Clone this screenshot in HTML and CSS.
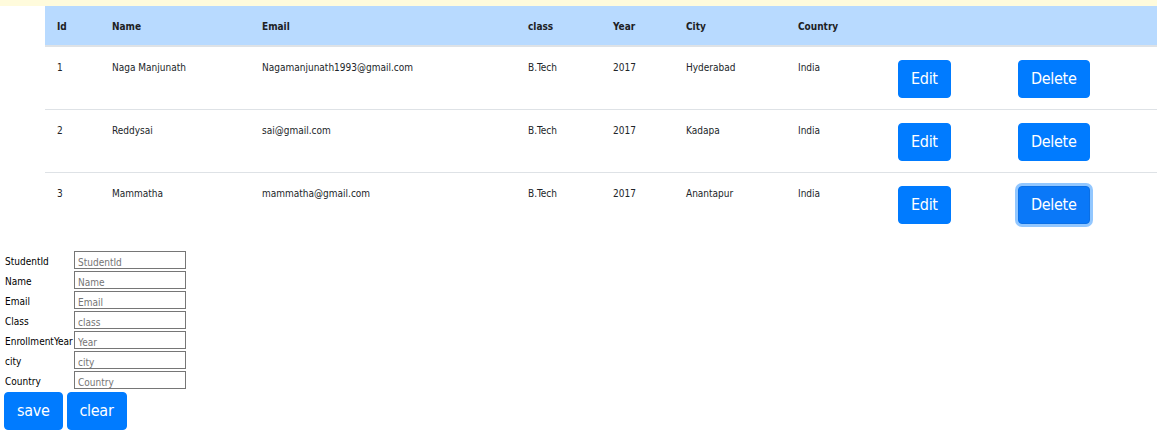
FILE: index.html
```html
<!DOCTYPE html>
<html>
<head>
<meta charset="utf-8">
<title>Students</title>
<link rel="stylesheet" href="styles.css">
</head>
<body>
<div class="notice"></div>
<table class="students">
  <thead>
    <tr>
      <th class="c-id">Id</th>
      <th class="c-name">Name</th>
      <th class="c-email">Email</th>
      <th class="c-class">class</th>
      <th class="c-year">Year</th>
      <th class="c-city">City</th>
      <th class="c-country">Country</th>
      <th class="c-edit"></th>
      <th class="c-del"></th>
    </tr>
  </thead>
  <tbody>
    <tr>
      <td>1</td><td>Naga Manjunath</td><td>Nagamanjunath1993@gmail.com</td><td>B.Tech</td><td>2017</td><td>Hyderabad</td><td>India</td>
      <td><button class="btn">Edit</button></td><td><button class="btn">Delete</button></td>
    </tr>
    <tr>
      <td>2</td><td>Reddysai</td><td>sai@gmail.com</td><td>B.Tech</td><td>2017</td><td>Kadapa</td><td>India</td>
      <td><button class="btn">Edit</button></td><td><button class="btn">Delete</button></td>
    </tr>
    <tr>
      <td>3</td><td>Mammatha</td><td>mammatha@gmail.com</td><td>B.Tech</td><td>2017</td><td>Anantapur</td><td>India</td>
      <td><button class="btn">Edit</button></td><td><button class="btn btn-focus">Delete</button></td>
    </tr>
  </tbody>
</table>

<form class="student-form">
  <div class="fields">
    <label class="lbl">StudentId</label><input class="inp" type="text" placeholder="StudentId">
    <label class="lbl">Name</label><input class="inp" type="text" placeholder="Name">
    <label class="lbl">Email</label><input class="inp" type="text" placeholder="Email">
    <label class="lbl">Class</label><input class="inp" type="text" placeholder="class">
    <label class="lbl">EnrollmentYear</label><input class="inp" type="text" placeholder="Year">
    <label class="lbl">city</label><input class="inp" type="text" placeholder="city">
    <label class="lbl">Country</label><input class="inp" type="text" placeholder="Country">
  </div>
  <div class="actions">
    <button class="btn" type="button">save</button>
    <button class="btn" type="button">clear</button>
  </div>
</form>
</body>
</html>
```

FILE: styles.css
```css
html, body {
  margin: 0;
  padding: 0;
  background: #ffffff;
  font-family: "DejaVu Sans Condensed", "DejaVu Sans", sans-serif;
  font-size: 10px;
  color: #212529;
}

.notice {
  height: 6px;
  background: #fffbdc;
}

.students {
  margin-left: 45px;
  width: 1112px;
  border-collapse: collapse;
  table-layout: fixed;
}

.students th,
.students td {
  box-sizing: border-box;
  padding: 13px 12px 11px;
  text-align: left;
  vertical-align: top;
  line-height: 16px;
  font-size: 10px;
}

.students th {
  background: #b8daff;
  font-weight: bold;
  color: #1d2124;
  border-bottom: 2px solid #dee2e6;
  height: 40px;
  padding-top: 13px;
  padding-bottom: 9px;
}

.students td {
  border-top: 1px solid #dee2e6;
}

.c-id { width: 55px; }
.c-name { width: 150px; }
.c-email { width: 266px; }
.c-class { width: 85px; }
.c-year { width: 73px; }
.c-city { width: 112px; }
.c-country { width: 100px; }
.c-edit { width: 120px; }

.btn {
  font-family: "DejaVu Sans Condensed", "DejaVu Sans", sans-serif;
  font-size: 16px;
  letter-spacing: -0.3px;
  line-height: 24px;
  padding: 6px 12px;
  color: #ffffff;
  background: #007bff;
  border: 1px solid #007bff;
  border-radius: 4px;
  cursor: pointer;
}

.btn-focus {
  background: #0a78f8;
  border-color: #0a6fe6;
  box-shadow: 0 0 0 3px rgba(38, 143, 255, 0.5);
}

.student-form {
  margin-top: 16px;
}

.fields {
  display: grid;
  grid-template-columns: 69px 112px;
  row-gap: 2px;
  padding-left: 5px;
  align-items: start;
}

.lbl {
  font-size: 10px;
  line-height: 14px;
  padding-top: 4px;
  color: #000000;
  white-space: nowrap;
}

.inp {
  box-sizing: border-box;
  width: 112px;
  height: 18px;
  margin: 0;
  padding: 4px 3px 0;
  border: 1px solid #767676;
  font-family: "DejaVu Sans Condensed", "DejaVu Sans", sans-serif;
  font-size: 10px;
}

.inp::placeholder {
  color: #757575;
}

.actions {
  display: flex;
  gap: 4px;
  margin-top: 3px;
  padding-left: 4px;
}
```
